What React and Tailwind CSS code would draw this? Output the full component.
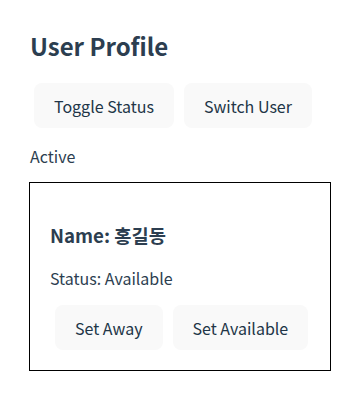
import { useState } from "react";

// ─── Shared button look ───────────────────────────────────────────────────────

const BTN =
  "whitespace-nowrap rounded-lg border border-transparent bg-[#f9f9f9] px-[19px] py-[9.5px] text-[16px] leading-6 font-normal text-[#213547]";

// ─── Status card ──────────────────────────────────────────────────────────────

function StatusCard({ name, status, onChange }) {
  return (
    <div className="w-[302px] border border-black px-5 pb-5 pt-5">
      <h3 className="mt-[18px] text-[18.72px] font-bold leading-[27px] text-[#2c3e50]">
        Name: {name}
      </h3>
      <p className="mt-[18px] text-[16px] leading-6 text-[#2c3e50]">Status: {status}</p>
      <div className="mt-[15px] flex gap-[10px] pl-[5px]">
        <button type="button" className={BTN} onClick={() => onChange("Away")}>
          Set Away
        </button>
        <button type="button" className={BTN} onClick={() => onChange("Available")}>
          Set Available
        </button>
      </div>
    </div>
  );
}

// ─── App ──────────────────────────────────────────────────────────────────────

export default function App() {
  const [active, setActive] = useState(true);
  const [status, setStatus] = useState("Available");
  const [user, setUser] = useState("홍길동");

  return (
    <div
      className="min-h-[415px] bg-white pl-[30px] pt-[28px]"
      style={{ fontFamily: '"Noto Sans CJK KR", "Noto Sans", sans-serif' }}
    >
      <h2 className="text-[24px] font-bold leading-9 text-[#2c3e50]">User Profile</h2>

      <div className="mt-[19px] flex gap-[10px] pl-1">
        <button type="button" className={BTN} onClick={() => setActive((a) => !a)}>
          Toggle Status
        </button>
        <button
          type="button"
          className={BTN}
          onClick={() => setUser((u) => (u === "홍길동" ? "김철수" : "홍길동"))}
        >
          Switch User
        </button>
      </div>

      <p className="mt-[16px] text-[16px] leading-6 text-[#2c3e50]">
        {active ? "Active" : "Inactive"}
      </p>

      <div className="mt-[14px] -ml-px">
        <StatusCard name={user} status={status} onChange={setStatus} />
      </div>
    </div>
  );
}
